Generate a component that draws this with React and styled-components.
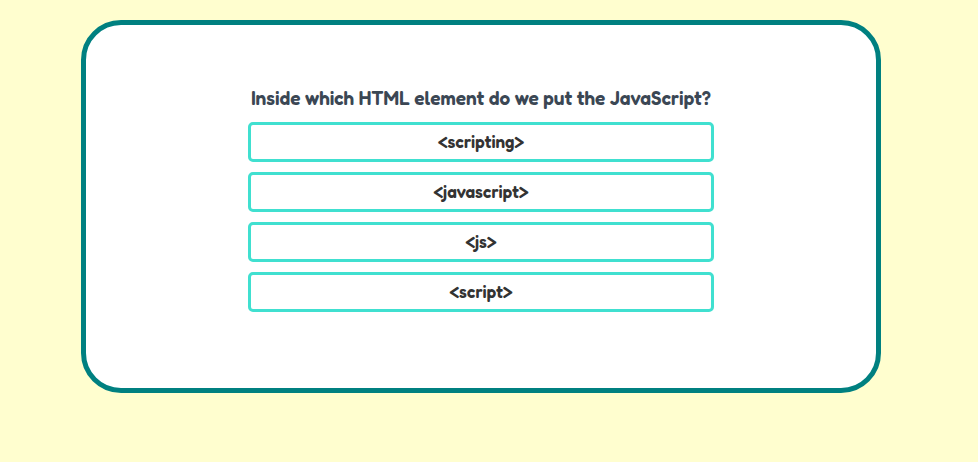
import React from "react";
import styled, { createGlobalStyle } from "styled-components";

const GlobalStyle = createGlobalStyle`
  *, *::before, *::after {
    box-sizing: border-box;
  }

  body {
    margin: 0;
    background: #fffecf;
    font-family: "Fredoka", "Lato", "Liberation Sans", sans-serif;
  }
`;

const Page = styled.main`
  min-height: 100vh;
  padding: 20px 16px 20px 0;
`;

const QuizCard = styled.section`
  display: flex;
  justify-content: center;
  width: 100%;
  max-width: 800px;
  margin: 0 auto;
  padding: 60px 20px 76px;
  border: 5px solid teal;
  border-radius: 40px;
  background: #ffffff;
`;

const QuizContent = styled.div`
  width: 100%;
  max-width: 466px;
`;

const Question = styled.h1`
  margin: 0 0 12px;
  color: #3b4754;
  font-size: 19px;
  font-weight: 600;
  line-height: 25px;
  text-align: center;
`;

const AnswerList = styled.div`
  display: grid;
  gap: 10px;
`;

const AnswerButton = styled.button`
  width: 100%;
  min-height: 40px;
  padding: 0 12px;
  border: 3px solid turquoise;
  border-radius: 5px;
  background: #ffffff;
  color: #333333;
  font-family: inherit;
  font-size: 17px;
  font-weight: 600;
  line-height: 24px;
  cursor: pointer;
`;

const answers = ["<scripting>", "<javascript>", "<js>", "<script>"];

export default function App() {
  return (
    <>
      <GlobalStyle />
      <Page>
        <QuizCard>
          <QuizContent>
            <Question>Inside which HTML element do we put the JavaScript?</Question>
            <AnswerList>
              {answers.map((answer) => (
                <AnswerButton key={answer} type="button">
                  {answer}
                </AnswerButton>
              ))}
            </AnswerList>
          </QuizContent>
        </QuizCard>
      </Page>
    </>
  );
}
